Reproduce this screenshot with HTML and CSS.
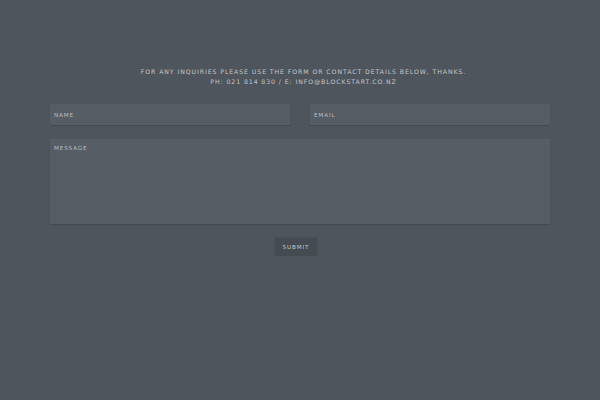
FILE: index.html
```html
<!DOCTYPE html>
<html>
<head>
<meta charset="utf-8">
<link rel="stylesheet" href="styles.css">
</head>
<body>
<main class="contact">
  <p class="intro">For any inquiries please use the form or contact details below, thanks.<br>Ph: 021 814 830 / E: info@blockstart.co.nz</p>
  <form class="form">
    <div class="row">
      <input class="field" type="text" placeholder="Name">
      <input class="field" type="text" placeholder="Email">
    </div>
    <textarea class="field message" placeholder="Message"></textarea>
    <div class="actions">
      <button class="submit" type="button">Submit</button>
    </div>
  </form>
</main>
</body>
</html>
```

FILE: styles.css
```css
html, body {
  margin: 0;
  padding: 0;
  background: #4f555c;
  font-family: "DejaVu Sans", "Open Sans", sans-serif;
}
.contact {
  width: 500px;
  margin: 0 auto;
  padding-top: 67px;
}
.intro {
  margin: 0 0 17px;
  padding-left: 7px;
  text-align: center;
  text-transform: uppercase;
  color: #c3c7cb;
  font-size: 6.2px;
  line-height: 10px;
  letter-spacing: 0.92px;
}
.form {
  display: flex;
  flex-direction: column;
}
.row {
  display: flex;
  gap: 20px;
  margin-bottom: 14px;
}
.field {
  flex: 1;
  box-sizing: border-box;
  height: 21px;
  border: none;
  border-radius: 0;
  margin: 0;
  background: #575d64;
  box-shadow: 0 1px 1px rgba(0,0,0,0.12);
  padding: 0 4px;
  font-family: inherit;
  font-size: 5.6px;
  letter-spacing: 0.9px;
  text-transform: uppercase;
  color: #c5c9cd;
  outline: none;
}
.field::placeholder {
  color: #b9bdc2;
  text-transform: uppercase;
}
.message {
  flex: none;
  width: 100%;
  height: 85px;
  resize: none;
  padding: 6px 4px;
  display: block;
}
.actions {
  display: flex;
  justify-content: center;
  margin-top: 14px;
}
.submit {
  width: 42px;
  height: 18px;
  margin-right: 8px;
  border: none;
  padding: 0;
  background: #464b51;
  color: #c5c9cd;
  font-family: inherit;
  font-size: 5.6px;
  letter-spacing: 0.9px;
  text-transform: uppercase;
  box-shadow: 0 0 2px rgba(0,0,0,0.12);
}
```
